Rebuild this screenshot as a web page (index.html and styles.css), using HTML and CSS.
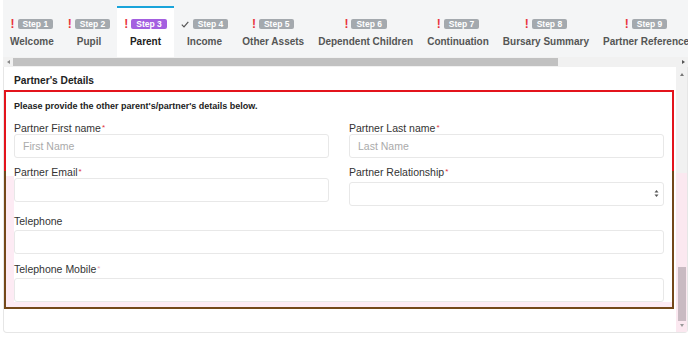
FILE: index.html
```html
<!DOCTYPE html>
<html lang="en">
<head>
<meta charset="UTF-8">
<meta name="viewport" content="width=device-width, initial-scale=1.0">
<title>Bursary Application - Parent</title>
<link rel="stylesheet" href="styles.css">
</head>
<body>
<div class="wizard">
    <div class="steps">
        <div class="step">
            <div class="step-top"><span class="flag">!</span><span class="badge">Step 1</span></div>
            <div class="step-name">Welcome</div>
        </div>
        <div class="step">
            <div class="step-top"><span class="flag">!</span><span class="badge">Step 2</span></div>
            <div class="step-name">Pupil</div>
        </div>
        <div class="step active">
            <div class="step-top"><span class="flag">!</span><span class="badge">Step 3</span></div>
            <div class="step-name">Parent</div>
        </div>
        <div class="step">
            <div class="step-top">
                <svg class="check" width="8" height="7" viewBox="0 0 8 7"><polyline points="0.8,3.6 3,5.8 7.3,0.8" fill="none" stroke="#555" stroke-width="1.2"/></svg>
                <span class="badge">Step 4</span>
            </div>
            <div class="step-name">Income</div>
        </div>
        <div class="step">
            <div class="step-top"><span class="flag">!</span><span class="badge">Step 5</span></div>
            <div class="step-name">Other Assets</div>
        </div>
        <div class="step">
            <div class="step-top"><span class="flag">!</span><span class="badge">Step 6</span></div>
            <div class="step-name">Dependent Children</div>
        </div>
        <div class="step">
            <div class="step-top"><span class="flag">!</span><span class="badge">Step 7</span></div>
            <div class="step-name">Continuation</div>
        </div>
        <div class="step">
            <div class="step-top"><span class="flag">!</span><span class="badge">Step 8</span></div>
            <div class="step-name">Bursary Summary</div>
        </div>
        <div class="step">
            <div class="step-top"><span class="flag">!</span><span class="badge">Step 9</span></div>
            <div class="step-name">Partner Reference</div>
        </div>
    </div>

    <div class="hscroll">
        <span class="sb-cell"><span class="arrow-left"></span></span>
        <div class="hscroll-track"><div class="hscroll-thumb"></div></div>
        <span class="sb-cell"><span class="arrow-right"></span></span>
    </div>

    <div class="panel">
        <div class="panel-body">
            <h3 class="section-title">Partner's Details</h3>
            <div class="highlight">
                <p class="note">Please provide the other parent's/partner's details below.</p>

                <div class="form-row two">
                    <div class="field">
                        <label>Partner First name<span class="req">*</span></label>
                        <input type="text" placeholder="First Name">
                    </div>
                    <div class="field">
                        <label>Partner Last name<span class="req">*</span></label>
                        <input type="text" placeholder="Last Name">
                    </div>
                </div>

                <div class="form-row two">
                    <div class="field">
                        <label>Partner Email<span class="req">*</span></label>
                        <input type="text">
                    </div>
                    <div class="field">
                        <label>Partner Relationship<span class="req">*</span></label>
                        <div class="select-wrap">
                            <select></select>
                            <svg class="select-arrows" width="5" height="9" viewBox="0 0 5 9">
                                <polygon points="2.5,1 4.5,3.5 0.5,3.5" fill="#555"/>
                                <polygon points="2.5,8 4.5,5.5 0.5,5.5" fill="#555"/>
                            </svg>
                        </div>
                    </div>
                </div>

                <div class="form-row full">
                    <div class="field">
                        <label>Telephone</label>
                        <input type="text">
                    </div>
                </div>

                <div class="form-row full last">
                    <div class="field">
                        <label>Telephone Mobile<span class="req faint">*</span></label>
                        <input type="text">
                    </div>
                </div>
            </div>
        </div>
        <div class="vscroll">
            <span class="arrow-up"></span>
            <div class="vscroll-track"><div class="vscroll-thumb"></div></div>
            <span class="arrow-down"></span>
        </div>
    </div>
</div>
</body>
</html>
```

FILE: styles.css
```css
body {
    font-family: "Liberation Sans", Arial, sans-serif;
    background-color: #fff;
    color: #333;
    margin: 0;
    padding: 0;
}
.wizard {
    margin-left: 3px;
    width: 685px;
}
.steps {
    display: flex;
    height: 57px;
    padding-top: 6px;
    box-sizing: border-box;
    background-color: #f4f5f6;
    overflow: hidden;
}
.step {
    flex: none;
    padding: 9px 7px 0;
    border-top: 2px solid transparent;
    white-space: nowrap;
}
.step.active {
    background-color: #fff;
    border-top-color: #1aa4da;
}
.step-top {
    display: flex;
    align-items: center;
    justify-content: center;
    height: 14px;
}
.flag {
    color: #e8343d;
    font-weight: bold;
    font-size: 12px;
    line-height: 12px;
    margin-right: 3px;
}
.check {
    margin-right: 4px;
}
.badge {
    background-color: #a4a9ae;
    color: #fff;
    font-weight: bold;
    font-size: 8.5px;
    line-height: 10px;
    padding: 0 5px;
    border-radius: 2px;
}
.step.active .badge {
    background-color: #a45fe0;
}
.step-name {
    text-align: center;
    font-size: 10px;
    font-weight: bold;
    color: #555;
    line-height: 14px;
    margin-top: 4px;
}
.step.active .step-name {
    color: #222;
}
.hscroll {
    display: flex;
    align-items: center;
    height: 10px;
    background-color: #f1f1f1;
}
.sb-cell {
    width: 10px;
    display: flex;
    justify-content: center;
}
.arrow-left {
    border-right: 3px solid #888;
    border-top: 2px solid transparent;
    border-bottom: 2px solid transparent;
}
.arrow-right {
    border-left: 3px solid #555;
    border-top: 2px solid transparent;
    border-bottom: 2px solid transparent;
}
.hscroll-track {
    flex: 1;
    height: 8px;
}
.hscroll-thumb {
    width: 545px;
    height: 8px;
    background-color: #c1c1c1;
}
.panel {
    display: flex;
    height: 266px;
    box-sizing: border-box;
    border: 1px solid #e6e6e6;
    border-top: none;
    border-radius: 0 0 4px 4px;
}
.panel-body {
    flex: 1;
    overflow: hidden;
}
.section-title {
    font-size: 10.2px;
    font-weight: bold;
    color: #222;
    line-height: 14px;
    margin: 7px 0 2px 10px;
}
.highlight {
    margin-right: 2px;
    padding: 8px 8px 5px;
    border: 2px solid #e3141c;
    border-image: linear-gradient(to bottom, #e3141c 37%, #74481a 37%) 1;
    background:
        linear-gradient(#fdebf4, #fdebf4) left bottom / 8px 61% no-repeat,
        linear-gradient(#fdebf4, #fdebf4) left bottom / 100% 5px no-repeat;
}
.note {
    margin: 0 0 9px;
    font-size: 9px;
    font-weight: bold;
    line-height: 13px;
    color: #222;
}
.form-row {
    margin-bottom: 8px;
}
.form-row.two {
    display: grid;
    grid-template-columns: 1fr 1fr;
    column-gap: 20px;
    align-items: start;
}
.form-row.last {
    margin-bottom: 0;
}
.field label {
    display: block;
    font-size: 10.5px;
    line-height: 12px;
    color: #333;
}
.form-row.full label {
    padding-top: 1px;
    margin-bottom: 3px;
}
.req {
    color: #e0303a;
    font-size: 8px;
    vertical-align: top;
    margin-left: 1px;
}
.req.faint {
    color: #e9a3b0;
}
.field input,
.field select {
    display: block;
    width: 100%;
    height: 24px;
    box-sizing: border-box;
    border: 1px solid #e8e8e8;
    border-radius: 3px;
    background-color: #fff;
    padding: 0 8px;
    font-family: "Liberation Sans", Arial, sans-serif;
    font-size: 10.5px;
    color: #333;
    outline: none;
}
.field input::placeholder {
    color: #aaa;
}
.select-wrap {
    position: relative;
    margin-top: 4px;
}
.field select {
    appearance: none;
    -webkit-appearance: none;
}
.select-arrows {
    position: absolute;
    right: 5px;
    top: 7px;
}
.vscroll {
    width: 11px;
    display: flex;
    flex-direction: column;
    align-items: center;
    background: linear-gradient(to bottom, #f1f1f1 40%, #fbe8f0 40%);
}
.arrow-up {
    margin: 6px 0 3px;
    border-bottom: 3px solid #777;
    border-left: 2px solid transparent;
    border-right: 2px solid transparent;
}
.arrow-down {
    margin: 3px 0 5px;
    border-top: 3px solid #999;
    border-left: 2px solid transparent;
    border-right: 2px solid transparent;
}
.vscroll-track {
    flex: 1;
    width: 8px;
    display: flex;
    flex-direction: column;
    justify-content: flex-end;
}
.vscroll-thumb {
    height: 54px;
    background-color: #c9bac2;
}
```
